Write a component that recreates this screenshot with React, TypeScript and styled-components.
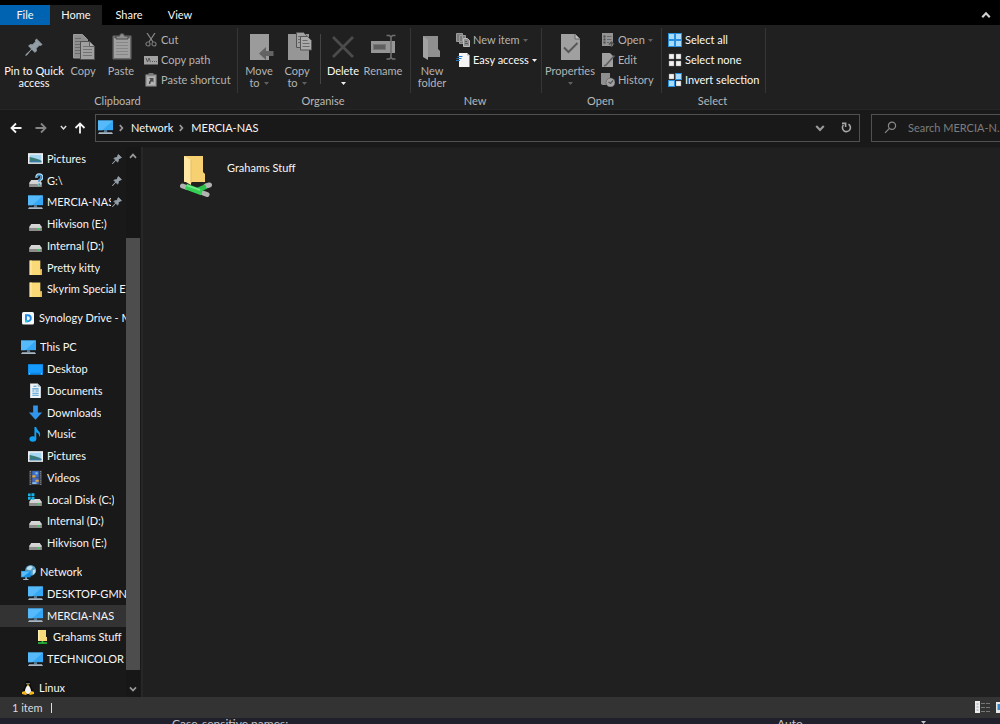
import React from "react";
import styled, { createGlobalStyle, css } from "styled-components";

const Global = createGlobalStyle`
  * { box-sizing: border-box; }
  html, body { margin: 0; background: #000; }
  body, button, input {
    font-family: Lato, "Segoe UI", sans-serif;
    font-size: 11px;
    line-height: 12px;
    color: #f6f6f6;
  }
  button { background: none; border: 0; padding: 0; }
  a { color: inherit; text-decoration: none; }
  svg { display: block; flex: none; }
`;

const Window = styled.div`
  height: 100vh;
  display: flex;
  flex-direction: column;
  overflow: hidden;
`;

/* ---------- tabs ---------- */
const TabBar = styled.nav`
  flex: none;
  display: flex;
  align-items: stretch;
  height: 25px;
  padding-top: 5px;
  background: #000;
`;
const Tab = styled.button<{ $kind?: "file" | "active"; $width: number }>`
  width: ${(p) => p.$width}px;
  ${(p) => p.$kind === "file" && css`background: #0063b1;`}
  ${(p) => p.$kind === "active" && css`background: #202020;`}
`;
const Collapse = styled.button`
  margin-left: auto;
  width: 28px;
  display: grid;
  place-items: center;
`;

/* ---------- ribbon ---------- */
const Ribbon = styled.div`
  flex: none;
  display: flex;
  height: 85px;
  padding: 3px 0 1px;
  background: #202020;
  border-bottom: 1px solid #262626;
`;
const Group = styled.section<{ $width: number }>`
  flex: none;
  width: ${(p) => p.$width}px;
  display: flex;
  flex-direction: column;
  background: linear-gradient(#363636, #363636) right top / 1px 65px no-repeat;
`;
const GroupBody = styled.div<{ $pad?: number }>`
  flex: 1;
  display: flex;
  padding-left: ${(p) => p.$pad ?? 2}px;
`;
const Caption = styled.h2`
  margin: 0;
  padding-right: 3px;
  font-size: 11px;
  font-weight: 400;
  line-height: 14px;
  text-align: center;
  color: #b8b8b8;
`;
const BigButton = styled.button<{ $width: number; $on?: boolean }>`
  width: ${(p) => p.$width}px;
  padding-top: 4px;
  display: flex;
  flex-direction: column;
  align-items: center;
  white-space: nowrap;
  color: ${(p) => (p.$on ? "#fafafa" : "#b4b4b4")};
  svg + span { margin-top: 3px; }
`;
const Line = styled.span`
  display: flex;
  align-items: center;
  justify-content: center;
  gap: 4px;
  height: 12px;
`;
const SmallList = styled.div`
  display: flex;
  flex-direction: column;
  padding: 2px 0 0 4px;
`;
const SmallButton = styled.button<{ $on?: boolean }>`
  height: 20px;
  display: flex;
  align-items: center;
  gap: 3px;
  white-space: nowrap;
  color: ${(p) => (p.$on ? "#fafafa" : "#b4b4b4")};
`;
const Divider = styled.div`
  width: 1px;
  height: 50px;
  margin: 6px 3px 0 4px;
  background: #444;
`;

/* ---------- address row ---------- */
const NavRow = styled.div`
  flex: none;
  display: flex;
  align-items: center;
  height: 37px;
  padding-bottom: 2px;
  background: #191919;
`;
const NavButtons = styled.div`
  width: 95px;
  display: flex;
  align-items: center;
  padding-left: 9px;
`;
const NavButton = styled.button<{ $width: number }>`
  width: ${(p) => p.$width}px;
  height: 24px;
  display: grid;
  place-items: center;
`;
const Address = styled.div`
  flex: 1;
  height: 28px;
  display: flex;
  align-items: center;
  padding-left: 2px;
  border: 1px solid #505050;
`;
const Crumb = styled.a`
  white-space: nowrap;
`;
const CrumbArrow = styled.span`
  width: 18px;
  padding-right: 2px;
  display: grid;
  place-items: center;
`;
const AddressTools = styled.div`
  margin-left: auto;
  display: flex;
`;
const Search = styled.label`
  flex: none;
  width: 129px;
  height: 28px;
  margin-left: 11px;
  display: flex;
  align-items: center;
  gap: 11px;
  padding-left: 12px;
  border: 1px solid #505050;
  border-right: 0;
  input {
    flex: 1;
    min-width: 0;
    padding: 0;
    border: 0;
    outline: 0;
    background: none;
  }
  input::placeholder { color: #7d7d7d; opacity: 1; }
`;

/* ---------- main area ---------- */
const Body = styled.div`
  flex: 1;
  min-height: 0;
  display: flex;
  overflow: hidden;
  background: #202020;
`;
const Sidebar = styled.aside`
  flex: none;
  width: 143px;
  display: flex;
  padding-right: 1px;
  background: #191919;
  border-right: 2px solid #272727;
`;
const Tree = styled.nav`
  flex: 1;
  min-width: 0;
  display: flex;
  flex-direction: column;
  overflow: hidden;
  padding-top: 1px;
  margin-bottom: -2px;
`;
const Spacer = styled.div`
  flex: 1 1 0;
`;
const TreeItem = styled.a<{ $level: number; $selected?: boolean }>`
  flex: 3 1 0;
  min-height: 0;
  display: flex;
  align-items: center;
  gap: 4px;
  padding-left: ${(p) => 21 + p.$level * 7}px;
  white-space: nowrap;
  overflow: hidden;
  ${(p) => p.$selected && css`background: #333;`}
`;
const ItemName = styled.span<{ $pinned?: boolean }>`
  overflow: hidden;
  ${(p) => p.$pinned && css`
    width: 64px;
    flex: none;
    & + svg { margin-left: -3px; }
  `}
`;
const ScrollBar = styled.div`
  flex: none;
  width: 14px;
  display: flex;
  flex-direction: column;
  align-items: center;
  justify-content: space-between;
  padding: 5px 0 4px;
  background: #171717;
`;
const Thumb = styled.div`
  width: 14px;
  flex: 1;
  margin: 78px 0 15px;
  background: #4d4d4d;
`;
const Files = styled.main`
  flex: 1;
  padding: 7px 36px;
  border-top: 1px solid #1c1c1c;
`;
const FileItem = styled.a`
  display: inline-flex;
  gap: 14px;
  span { padding-top: 7px; }
`;

const StatusBar = styled.footer`
  flex: none;
  height: 21px;
  display: flex;
  align-items: center;
  gap: 8px;
  padding-left: 12px;
  background: #333;
  color: #dcdcdc;
`;
const Bar = styled.i`
  width: 1px;
  height: 10px;
  background: #dcdcdc;
`;
const Views = styled.div`
  margin-left: auto;
  display: flex;
  gap: 6px;
`;
const Behind = styled.div`
  flex: none;
  height: 6px;
  display: grid;
  grid-template-columns: 605fr 144fr 79fr;
  padding-left: 172px;
  overflow: hidden;
  background: #20202c;
  color: #c4c4c8;
  font-size: 12px;
  svg { margin-top: 3px; }
`;

/* ---------- icons ---------- */
const Caret = ({ c = "#5f5f5f" }: { c?: string }) => (
  <svg width="5" height="3" viewBox="0 0 5 3"><path d="M0 0h5L2.500 3z" fill={c} /></svg>
);
const Chevron = ({ dir, c = "#9a9a9a", w = 8 }: { dir: "up" | "down" | "right"; c?: string; w?: number }) => (
  <svg width={w} height={w} viewBox="0 0 8 8" fill="none" stroke={c} strokeWidth="1.700">
    <path d={dir === "up" ? "M1 5.800 4 2.600 7 5.800" : dir === "down" ? "M1 2.400 4 5.600 7 2.400" : "M2.800 1.200 5.400 4 2.800 6.800"} />
  </svg>
);
const pinShape = "M11.500 1 17 6.500 15.800 7.300 14.300 7.200 11.200 10.300 11.300 13.200 9.800 14.200 6.600 11 1.800 17 0.800 17.400 1.200 16.300 6.900 11.300 3.700 8 4.800 6.800 7.600 6.800 10.700 3.700 10.400 2.100z";
const Big = ({ children }: { children: React.ReactNode }) => (
  <svg width="30" height="30" viewBox="0 0 30 30">{children}</svg>
);
const Small = ({ children, size = 14 }: { children: React.ReactNode; size?: number }) => (
  <svg width={size} height={size} viewBox="0 0 14 14">{children}</svg>
);

const PinBig = () => <Big><path transform="translate(6 6)" d={pinShape} fill="#929da5" stroke="#929da5" /></Big>;
const PinSmall = () => <svg width="10" height="10" viewBox="0 0 18 18"><path d={pinShape} fill="#929da5" stroke="#929da5" strokeWidth="1.600" /></svg>;
const CopyIcon = () => (
  <Big>
    <path d="M5.500 2.500h9l5 5V26h-14z" fill="#8f8f8f" stroke="#9c9c9c" />
    <path d="M7 6.500h6M7 9.500h9M7 12.500h6M7 15.500h6M7 18.500h6M7 21.500h6" stroke="#6b6b6b" />
    <path d="M12.500 9.500h9l5 5v13h-14z" fill="#a0a0a0" stroke="#505050" />
    <path d="M15 14.500h6M15 17.500h9M15 20.500h9M15 23.500h9" stroke="#737373" />
    <path d="M21.500 9.500v5h5" fill="#b0b0b0" stroke="#5f5f5f" />
  </Big>
);
const PasteIcon = () => (
  <Big>
    <rect x="6.500" y="3.500" width="19" height="24" rx="1" fill="#6a6a6a" />
    <rect x="8" y="6" width="16" height="20" fill="#a0a0a0" />
    <path d="M10 10.500h12M10 13.500h12M10 16.500h12M10 19.500h12M10 22.500h12" stroke="#878787" />
    <path d="M10 7V4h3.500a2.500 2.500 0 0 1 5 0H22v3z" fill="#8d8d8d" stroke="#4a4a4a" />
  </Big>
);
const MoveIcon = () => (
  <Big>
    <path d="M6 2h19v26H6z" fill="#9b9b9b" />
    <path d="M15 21.500 22 15v4h7.500v5H22v4z" fill="#636363" />
  </Big>
);
const CopyToIcon = () => (
  <Big>
    <path d="M6 2h21v26H6z" fill="#969696" />
    <path d="M14.500 .500h7l3 3v12h-10z" fill="#a2a2a2" stroke="#555" />
    <path d="M16 4.500h6M16 7.500h4M16 10.500h4" stroke="#6b6b6b" />
    <path d="M18.500 4.500h7l4 4v9.500h-11z" fill="#aaa" stroke="#555" />
    <path d="M20.500 8.500h5M20.500 11.500h7M20.500 14.500h7" stroke="#6b6b6b" />
  </Big>
);
const DeleteIcon = () => <Big><path d="M5 5 25 25M25 5 5 25" stroke="#4b4b4b" strokeWidth="2.700" /></Big>;
const RenameIcon = () => (
  <Big>
    <rect x="3" y="9" width="24" height="12" fill="#969696" />
    <rect x="5.500" y="12.500" width="12" height="5" fill="#5f5f5f" stroke="#777" />
    <path d="M18.500 3.500h3l1.500 1.500 1.500-1.500h3M18.500 27h3l1.500-1.500 1.500 1.500h3M23 5v21" fill="none" stroke="#6e6e6e" strokeWidth="1.600" />
  </Big>
);
const NewFolderIcon = () => (
  <Big>
    <path d="M6 4h15v13l2 2v6H10z" fill="#8f8f8f" />
    <path d="M6 4l5 4v20l-5-3z" fill="#a2a2a2" />
  </Big>
);
const PropertiesIcon = () => (
  <Big>
    <path d="M6 2h14l5 5v21H6z" fill="#a0a0a0" />
    <path d="M20 2v5h5" fill="#c0c0c0" stroke="#666" />
    <path d="m9 15.500 4.500 4.500 9-9" fill="none" stroke="#585858" strokeWidth="2" />
  </Big>
);
const CutIcon = () => (
  <Small>
    <path d="M3 0l6 9M11 0 5 9" stroke="#8a8a8a" strokeWidth="1.200" />
    <circle cx="4" cy="11" r="2" fill="none" stroke="#747474" strokeWidth="1.200" />
    <circle cx="10" cy="11" r="2" fill="none" stroke="#747474" strokeWidth="1.200" />
  </Small>
);
const PathIcon = () => (
  <Small>
    <rect y="3" width="14" height="8.500" fill="#a2a2a2" />
    <path d="M2 5l1.500 4L5 5l1.500 4M8 8.500h1M10 8.500h1M12 8.500h1" fill="none" stroke="#555" />
  </Small>
);
const ShortcutIcon = () => (
  <Small>
    <rect x="1.500" y="1.500" width="11" height="12" fill="#999" />
    <path d="M4.500 0h5v2.500h-5z" fill="#777" />
    <rect x="3" y="3.500" width="8" height="8.500" fill="#b4b4b4" />
    <path d="M5 5h4.500v4.500L8 8.200Q6.300 9 6.300 11H4.800Q4.600 8.300 6.500 6.700z" fill="#4c4c4c" />
  </Small>
);
const NewItemIcon = () => (
  <Small>
    <path d="M.500.500h6v8h-6zM3.500 2.500h6v8h-6z" fill="#7c7c7c" stroke="#9b9b9b" />
    <path d="M7.500 5.500h4l2 2v6h-6z" fill="#909090" stroke="#bcbcbc" />
    <path d="M9 8.500h2M9 10.500h3" stroke="#5a5a5a" />
  </Small>
);
const EasyIcon = () => (
  <Small>
    <path d="M3 0h8l2.500 2.500V14H3z" fill="#f4f4f4" />
    <path d="M11 0v2.500h2.500" fill="#bbb" />
    <path d="M1.500 3.500h5M.500 5.500h5M0 7.500h4" stroke="#2478c0" />
  </Small>
);
const OpenIcon = () => (
  <Small>
    <rect x="1" width="11" height="13" fill="#939393" />
    <path d="M2.500 3.500h2M2.500 6.500h2M2.500 9.500h2" stroke="#4b4b4b" strokeWidth="2" />
    <path d="M6 3.500h4.500M6 6.500h4.500M6 9.500h2" stroke="#666" />
    <path d="M10.500 14V9.500M8 11.500l2.500-2.500 2.500 2.500" fill="none" stroke="#555" strokeWidth="1.400" />
  </Small>
);
const EditIcon = () => (
  <Small>
    <path d="M1 0h8l3 3v11H1z" fill="#a0a0a0" />
    <path d="M13.500 2.500 5 12l-2 1" fill="none" stroke="#606060" strokeWidth="1.600" />
  </Small>
);
const HistoryIcon = () => (
  <Small>
    <path d="M0 0h9v12H1.500L0 11z" fill="#8f8f8f" />
    <circle cx="9.500" cy="9.500" r="4.500" fill="#a2a2a2" stroke="#555" strokeWidth=".6" />
    <path d="m7.500 9 2 1.500L12 7.500" fill="none" stroke="#555" strokeWidth="1.200" />
  </Small>
);
const SelectIcon = ({ on }: { on: number[] }) => (
  <Small>
    {[0, 1, 2, 3].map((i) => {
      const x = (i % 2) * 7;
      const y = i > 1 ? 7 : 0;
      return on.includes(i) ? (
        <rect key={i} x={x + 0.5} y={y + 0.5} width="6" height="6" fill="#a8dcff" stroke="#2b8fe0" />
      ) : (
        <rect key={i} x={x + 1} y={y + 1} width="5" height="5" fill="#f2f2f2" stroke="#8a8a8a" strokeWidth=".4" />
      );
    })}
  </Small>
);

const Monitor = () => (
  <Small size={15}>
    <path d="M0 .500h14v9H0z" fill="#35a8f5" />
    <path d="M0 .500h14L4 9.500H0z" fill="#55b9fa" />
    <path d="M5.500 9.500h3v2h-3z" fill="#5e7f98" />
    <path d="M1 11.500h12l1 1.500H0z" fill="#a9b8c4" />
  </Small>
);
const Picture = () => (
  <Small size={15}>
    <rect y="2" width="14" height="10" fill="#f0f0f0" />
    <rect x="1.500" y="3.500" width="11" height="7" fill="#a5d6f2" />
    <path d="M1.500 5.500Q6 6 12.500 9v1.500h-11z" fill="#3c7d79" />
    <path d="M1.500 9.500h11v1h-11z" fill="#3a78b8" />
  </Small>
);
const driveBody = (
  <>
    <path d="M3 6.500h8l2 3H1z" fill="#d6d6d6" />
    <rect x="1" y="9" width="12" height="4" rx=".5" fill="#8c8c8c" />
    <path d="M1.500 9.500h11" stroke="#ededed" />
    <rect x="9" y="10.500" width="2" height="1.300" fill="#2fe34e" />
  </>
);
const Drive = () => <Small size={15}>{driveBody}</Small>;
const UnknownDrive = () => (
  <Small size={15}>
    {driveBody}
    <path d="M8 4.500Q8 1.500 10.500 1.500T13 4Q13 5.500 11.500 6.300T10.500 8.200M10.500 9.500v2" fill="none" stroke="#b9def5" strokeWidth="2.600" />
    <path d="M8.300 4.500Q8.300 2 10.500 2T12.700 4Q12.700 5.300 11.200 6.200T10.500 8.200M10.500 9.700v1.500" fill="none" stroke="#2a82c4" strokeWidth="1.200" />
  </Small>
);
const SystemDrive = () => (
  <Small size={15}>
    {driveBody}
    <path d="M0 1.500h2.500V4H0zM3.200 1.200H6V4H3.200zM0 4.700h2.500v2.500H0zM3.200 4.700H6v2.500H3.200z" fill="#16b4e8" />
  </Small>
);
const Folder = () => (
  <Small size={15}>
    <path d="M1.500 .500h10V9H13v5H1.500z" fill="#f9d978" />
    <path d="M1.500 .500h2V14h-2z" fill="#ffe59c" />
    <path d="M11.500 8.500H13V14h-1.500z" fill="#e8b84b" />
  </Small>
);
const SharedFolder = () => (
  <Small>
    <path d="M3 0h8v7h1v4H3z" fill="#f9d978" />
    <path d="M3 0h1.500v11H3z" fill="#fff0b5" />
    <path d="M7.500 11v2M3 13h9" stroke="#27c840" strokeWidth="1.600" />
  </Small>
);
const Synology = () => (
  <Small>
    <rect x="1" y="1" width="12" height="12.500" rx="1.500" fill="#f4f8fc" />
    <path d="M5 4.200h1.800a3 3 0 0 1 0 6H5z" fill="none" stroke="#2388e8" strokeWidth="1.900" />
    <path d="M4 10.200h2.500" stroke="#1ed3c0" strokeWidth="1.900" />
  </Small>
);
const Desktop = () => (
  <Small size={15}>
    <rect y="2" width="14" height="10" fill="#0d84de" />
    <path d="M.500 2.500h13v7.500H.500z" fill="#159bff" />
    <path d="M1 11h1M12 11h1" stroke="#bfe4ff" />
  </Small>
);
const Documents = () => (
  <Small size={15}>
    <path d="M2 .500h7l3 3V14H2z" fill="#eef3f6" />
    <path d="M9 .500v3h3" fill="#a9b6bf" />
    <path d="M5 3h3M4 5.500h6M4 7.500h2M7 7.500h3M4 9.500h6M4 11.500h6" stroke="#4a9ccf" />
  </Small>
);
const Download = () => <Small size={15}><path d="M4.800.500h4.400v6.500h4L7 13.800.800 7h4z" fill="#3294ea" /></Small>;
const Music = () => (
  <Small size={15}>
    <ellipse cx="4.500" cy="11.200" rx="3.200" ry="2.500" fill="#14a0f5" />
    <path d="M6 0h1.700Q8 2.500 10 4q2.500 2.500.500 5.500Q10.600 6 7.700 5v6.500H6z" fill="#14a0f5" />
  </Small>
);
const Video = () => (
  <Small size={15}>
    <rect x="1" y=".500" width="12" height="13.500" fill="#3d3d42" />
    <path d="M2.200 1v13M11.800 1v13" stroke="#8b8b92" strokeDasharray="1 1" />
    <path d="M4 1h6v6H4z" fill="#3a70cf" /><path d="M4 7.500h6V13H4z" fill="#4569c2" />
    <path d="M4 5h3v2H4zM7 9h3v2H7z" fill="#e0a63d" /><path d="M7 2h2v2H7zM4 11.500h4V13H4z" fill="#86bfe5" />
  </Small>
);
const NetworkIcon = () => (
  <Small size={15}>
    <circle cx="9" cy="5" r="5" fill="#5b9fc5" />
    <path d="M6 2q3-2 5 0L9 5 5 4zM11 5l2.500-1v3L11 9z" fill="#bde3f2" />
    <path d="M0 5.500h9v6H0z" fill="#1590e8" /><path d="M.500 6h8L2 11H.500z" fill="#5bbcf8" />
    <path d="M4 11.500h1.500V13H7v1H2v-1h2z" fill="#a9b8c4" />
  </Small>
);
const Tux = () => (
  <Small>
    <path d="M7 0c2.500 0 2.700 2 2.600 4 0 1.500 2.900 4 2.400 8H2c-.500-4 2.400-6.500 2.400-8C4.300 2 4.500 0 7 0z" fill="#0a0a0a" />
    <path d="M7 4.500c1.500 0 3 3.500 3 5.500S8.500 13 7 13s-3-1-3-3 1.500-5.500 3-5.500z" fill="#f5f5f5" />
    <path d="M5.500 3.500h3L7 5.500z" fill="#f5b718" />
    <path d="M1 11l2.500-1L6 13l-1 1-4-1zM13 11l-2.500-1L8 13l1 1 4-1z" fill="#f5b718" />
    <path d="M5.500 2.500h1M7.500 2.500h1" stroke="#ddd" />
  </Small>
);
const Arrow = ({ d, c }: { d: string; c: string }) => (
  <svg width="12" height="12" viewBox="0 0 12 12" fill="none" stroke={c} strokeWidth="1.800"><path d={d} /></svg>
);
const Refresh = () => (
  <svg width="11" height="11" viewBox="0 0 11 11" fill="none" stroke="#a8a8a8" strokeWidth="1.600">
    <path d="M7.500 2.200A4 4 0 1 1 2.400 3M1 1.400h3.600v3.500" />
  </svg>
);
const SearchIcon = () => (
  <svg width="13" height="13" viewBox="0 0 13 13" fill="none" stroke="#8a8a8a" strokeWidth="1.200">
    <circle cx="8" cy="4.800" r="3.600" /><path d="M5.400 7.400 1 11.800" />
  </svg>
);
const BigFolder = () => (
  <svg width="34" height="42" viewBox="0 0 34 42">
    <path d="M5 1h19v16l2 2v8H5z" fill="#f6d071" />
    <path d="M5 1 12 5v25l-7-4z" fill="#ffe7a4" />
    <path d="M12 5v23" stroke="#e9be5d" />
    <path d="M3.500 31 8 32.500M24 38l4 1.500M27 31l3.500-1" stroke="#b3b3b3" strokeWidth="5" strokeLinecap="round" />
    <path d="m18 35.500 9-4" stroke="#2bbf4b" strokeWidth="5" />
    <path d="M7 31.500 23 37.500" stroke="#35cf55" strokeWidth="6" />
    <path d="m8 30.500 13 4.500" stroke="#75ec8c" strokeWidth="1.500" />
  </svg>
);
const DetailsView = () => (
  <svg width="15" height="13" viewBox="0 0 15 13">
    <rect width="5" height="12" fill="#ececec" />
    <path d="M1.500 3h2M1.500 6h2M1.500 9h2" stroke="#8a9ab0" />
    <path d="M6 2.500h4M11 2.500h4M6 6.500h4M11 6.500h4M6 10.500h4M11 10.500h4" stroke="#777" />
  </svg>
);
const TilesView = () => (
  <svg width="4" height="12" viewBox="0 0 4 12">
    <rect width="6" height="11" y="1" fill="#e8e8e8" /><rect x="1.500" y="3" width="4" height="6" fill="#348ac9" />
  </svg>
);

/* ---------- data ---------- */
type Node = { name: string; icon: React.FC; level?: number; pinned?: boolean; selected?: boolean };
const groups: Node[][] = [
  [
    { name: "Pictures", icon: Picture, level: 1, pinned: true },
    { name: "G:\\", icon: UnknownDrive, level: 1, pinned: true },
    { name: "MERCIA-NAS", icon: Monitor, level: 1, pinned: true },
    { name: "Hikvison (E:)", icon: Drive, level: 1 },
    { name: "Internal (D:)", icon: Drive, level: 1 },
    { name: "Pretty kitty", icon: Folder, level: 1 },
    { name: "Skyrim Special E", icon: Folder, level: 1 },
  ],
  [{ name: "Synology Drive - M", icon: Synology }],
  [
    { name: "This PC", icon: Monitor },
    { name: "Desktop", icon: Desktop, level: 1 },
    { name: "Documents", icon: Documents, level: 1 },
    { name: "Downloads", icon: Download, level: 1 },
    { name: "Music", icon: Music, level: 1 },
    { name: "Pictures", icon: Picture, level: 1 },
    { name: "Videos", icon: Video, level: 1 },
    { name: "Local Disk (C:)", icon: SystemDrive, level: 1 },
    { name: "Internal (D:)", icon: Drive, level: 1 },
    { name: "Hikvison (E:)", icon: Drive, level: 1 },
  ],
  [
    { name: "Network", icon: NetworkIcon },
    { name: "DESKTOP-GMNM", icon: Monitor, level: 1 },
    { name: "MERCIA-NAS", icon: Monitor, level: 1, selected: true },
    { name: "Grahams Stuff", icon: SharedFolder, level: 2 },
    { name: "TECHNICOLOR", icon: Monitor, level: 1 },
  ],
  [{ name: "Linux", icon: Tux }],
];

export default function App() {
  return (
    <Window>
      <Global />
      <TabBar>
        <Tab $kind="file" $width={50}>File</Tab>
        <Tab $kind="active" $width={52}>Home</Tab>
        <Tab $width={54}>Share</Tab>
        <Tab $width={48}>View</Tab>
        <Collapse aria-label="Minimise the ribbon"><Chevron dir="up" c="#d0d0d0" w={10} /></Collapse>
      </TabBar>

      <Ribbon>
        <Group $width={238}>
          <GroupBody $pad={4}>
            <BigButton $width={60} $on><PinBig /><Line>Pin to Quick</Line><Line>access</Line></BigButton>
            <BigButton $width={38}><CopyIcon /><Line>Copy</Line></BigButton>
            <BigButton $width={38}><PasteIcon /><Line>Paste</Line></BigButton>
            <SmallList>
              <SmallButton><CutIcon />Cut</SmallButton>
              <SmallButton><PathIcon />Copy path</SmallButton>
              <SmallButton><ShortcutIcon />Paste shortcut</SmallButton>
            </SmallList>
          </GroupBody>
          <Caption>Clipboard</Caption>
        </Group>
        <Group $width={173}>
          <GroupBody>
            <BigButton $width={38}><MoveIcon /><Line>Move</Line><Line>to <Caret /></Line></BigButton>
            <BigButton $width={38}><CopyToIcon /><Line>Copy</Line><Line>to <Caret /></Line></BigButton>
            <Divider />
            <BigButton $width={38} $on><DeleteIcon /><Line>Delete</Line><Line><Caret c="#f0f0f0" /></Line></BigButton>
            <BigButton $width={42}><RenameIcon /><Line>Rename</Line></BigButton>
          </GroupBody>
          <Caption>Organise</Caption>
        </Group>
        <Group $width={131}>
          <GroupBody $pad={1}>
            <BigButton $width={40}><NewFolderIcon /><Line>New</Line><Line>folder</Line></BigButton>
            <SmallList>
              <SmallButton><NewItemIcon />New item <Caret /></SmallButton>
              <SmallButton $on><EasyIcon />Easy access <Caret c="#f0f0f0" /></SmallButton>
            </SmallList>
          </GroupBody>
          <Caption>New</Caption>
        </Group>
        <Group $width={120}>
          <GroupBody $pad={1}>
            <BigButton $width={54}><PropertiesIcon /><Line>Properties</Line><Line><Caret /></Line></BigButton>
            <SmallList>
              <SmallButton><OpenIcon />Open <Caret /></SmallButton>
              <SmallButton><EditIcon />Edit</SmallButton>
              <SmallButton><HistoryIcon />History</SmallButton>
            </SmallList>
          </GroupBody>
          <Caption>Open</Caption>
        </Group>
        <Group $width={104}>
          <GroupBody>
            <SmallList>
              <SmallButton $on><SelectIcon on={[0, 1, 2, 3]} />Select all</SmallButton>
              <SmallButton $on><SelectIcon on={[]} />Select none</SmallButton>
              <SmallButton $on><SelectIcon on={[1, 2]} />Invert selection</SmallButton>
            </SmallList>
          </GroupBody>
          <Caption>Select</Caption>
        </Group>
      </Ribbon>

      <NavRow>
        <NavButtons>
          <NavButton $width={14} aria-label="Back"><Arrow c="#f4f4f4" d="M11.500 6H1.500M6 1.500 1.500 6 6 10.500" /></NavButton>
          <NavButton $width={40} aria-label="Forward"><Arrow c="#858585" d="M.500 6h10M6 1.500 10.500 6 6 10.500" /></NavButton>
          <NavButton $width={4} aria-label="Recent locations"><Chevron dir="down" c="#e0e0e0" w={7} /></NavButton>
          <NavButton $width={32} aria-label="Up"><Arrow c="#f4f4f4" d="M6 11.500V1.500M1.500 6 6 1.500 10.500 6" /></NavButton>
        </NavButtons>
        <Address>
          <Monitor />
          <CrumbArrow><Chevron dir="right" /></CrumbArrow>
          <Crumb href="#network">Network</Crumb>
          <CrumbArrow><Chevron dir="right" /></CrumbArrow>
          <Crumb href="#mercia">MERCIA-NAS</Crumb>
          <AddressTools>
            <NavButton $width={28} aria-label="Previous locations"><Chevron dir="down" w={10} /></NavButton>
            <NavButton $width={25} aria-label="Refresh"><Refresh /></NavButton>
          </AddressTools>
        </Address>
        <Search>
          <SearchIcon />
          <input aria-label="Search" type="text" placeholder="Search MERCIA-N.." />
        </Search>
      </NavRow>

      <Body>
        <Sidebar>
          <Tree>
            {groups.map((group, g) => (
              <React.Fragment key={g}>
                {g > 0 && <Spacer />}
                {group.map(({ name, icon: Icon, level = 0, pinned, selected }) => (
                  <TreeItem key={name} href="#item" $level={level} $selected={selected}>
                    <Icon />
                    <ItemName $pinned={pinned}>{name}</ItemName>
                    {pinned && <PinSmall />}
                  </TreeItem>
                ))}
              </React.Fragment>
            ))}
          </Tree>
          <ScrollBar>
            <Chevron dir="up" />
            <Thumb />
            <Chevron dir="down" />
          </ScrollBar>
        </Sidebar>
        <Files>
          <FileItem href="#grahams"><BigFolder /><span>Grahams Stuff</span></FileItem>
        </Files>
      </Body>

      <StatusBar>
        <span>1 item</span>
        <Bar />
        <Views><DetailsView /><TilesView /></Views>
      </StatusBar>
      <Behind>
        <span>Case-sensitive names:</span>
        <span>Auto</span>
        <Caret c="#c4c4c8" />
      </Behind>
    </Window>
  );
}
